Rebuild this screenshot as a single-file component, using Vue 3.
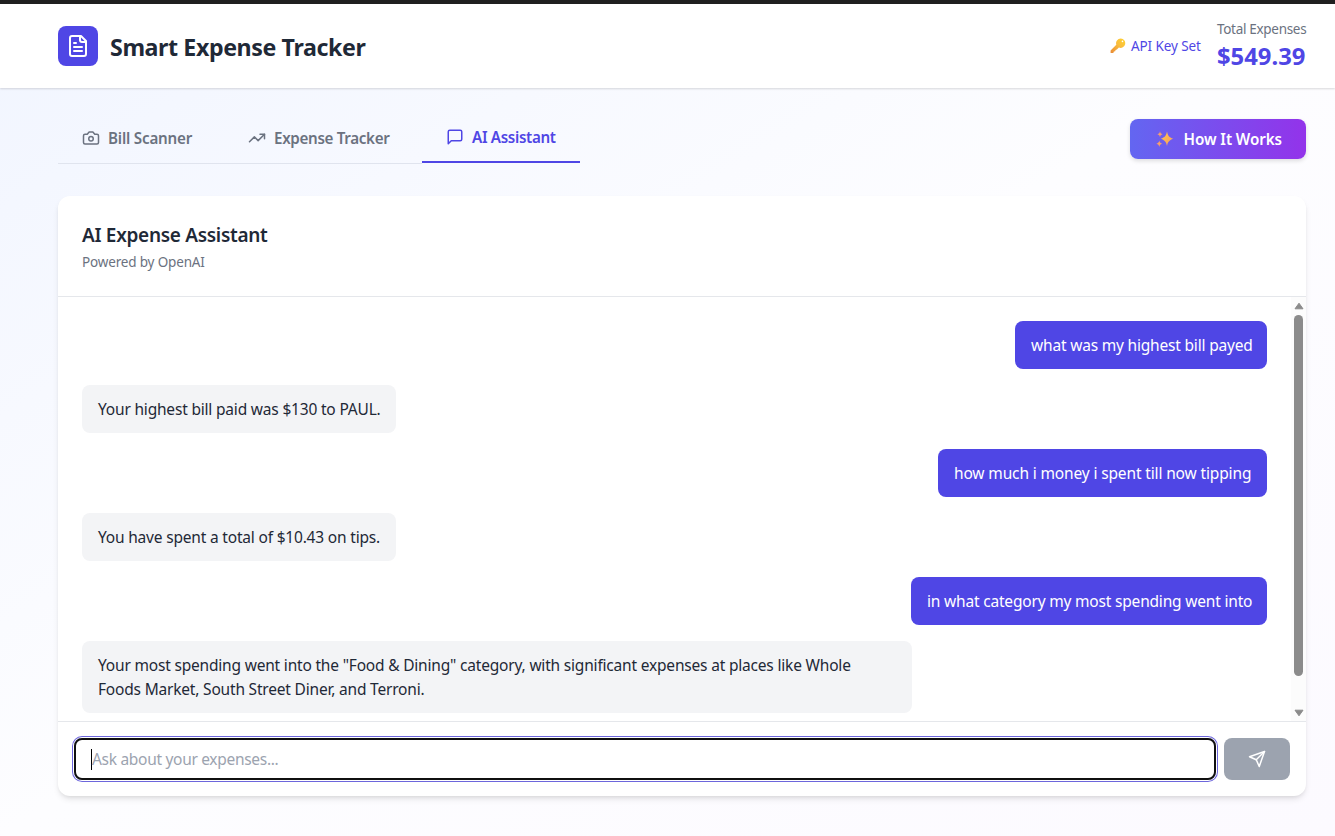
<script setup>
const tabs = [
  { label: 'Bill Scanner', icon: 'camera', cls: 'scan' },
  { label: 'Expense Tracker', icon: 'trend', cls: 'track' },
  { label: 'AI Assistant', icon: 'chat', cls: 'active' },
]
const messages = [
  { from: 'user', cls: 'm1', text: 'what was my highest bill payed' },
  { from: 'bot', cls: 'm2', text: 'Your highest bill paid was $130 to PAUL.' },
  { from: 'user', cls: 'm3', text: 'how much i money i spent till now tipping' },
  { from: 'bot', cls: 'm4', text: 'You have spent a total of $10.43 on tips.' },
  { from: 'user', cls: 'm5', text: 'in what category my most spending went into' },
  { from: 'bot', cls: 'm6', text: 'Your most spending went into the "Food & Dining" category, with significant expenses at places like Whole Foods Market, South Street Diner, and Terroni.' },
]
</script>

<template>
  <div class="page">
    <header class="header">
      <div class="brand">
        <div class="logo">
          <svg class="ico" width="24" height="24" viewBox="0 0 24 24"><path d="M15 2H6a2 2 0 0 0-2 2v16a2 2 0 0 0 2 2h12a2 2 0 0 0 2-2V7Z" /><path d="M14 2v4a2 2 0 0 0 2 2h4" /><path d="M10 9H8" /><path d="M16 13H8" /><path d="M16 17H8" /></svg>
        </div>
        <h1><span>Smart Expense Tracker</span></h1>
      </div>
      <div class="summary">
        <div class="api">
          <svg width="16" height="16" viewBox="0 0 16 16">
            <defs><linearGradient id="kg" x1="1" y1="0" x2="0" y2="1"><stop offset="0" stop-color="#ffd22e" /><stop offset=".45" stop-color="#f9bd3d" /><stop offset="1" stop-color="#e98a35" /></linearGradient></defs>
            <path fill="url(#kg)" fill-rule="evenodd" d="M10.800.5a4.700 4.700 0 0 0-4.500 6.200L.6 12.400v2.500h2.700l.6-1.300 1.300-.3.4-1.300 1.300-.4 2-2A4.700 4.700 0 1 0 10.800.5Zm1.700 2.100a.8.8 0 1 1 0 1.600.8.800 0 0 1 0-1.600Z" />
          </svg>
          <span>API Key Set</span>
        </div>
        <div class="total"><div class="total-label"><span>Total Expenses</span></div><div class="total-value"><span>$549.39</span></div></div>
      </div>
    </header>
    <main class="main">
      <div class="toolbar">
        <nav class="tabs">
          <div v-for="t in tabs" :key="t.label" class="tab" :class="t.cls">
            <svg class="ico" width="18" height="18" viewBox="0 0 24 24">
              <template v-if="t.icon === 'camera'"><path d="M14.500 4h-5L7 7H4a2 2 0 0 0-2 2v9a2 2 0 0 0 2 2h16a2 2 0 0 0 2-2V9a2 2 0 0 0-2-2h-3l-2.500-3z" /><circle cx="12" cy="13" r="3" /></template>
              <template v-else-if="t.icon === 'trend'"><path d="m22 7-8.500 8.500-5-5L2 17" /><path d="M16 7h6v6" /></template>
              <path v-else d="M21 15a2 2 0 0 1-2 2H7l-4 4V5a2 2 0 0 1 2-2h14a2 2 0 0 1 2 2z" />
            </svg>
            <span>{{ t.label }}</span>
          </div>
        </nav>
        <button class="how">
          <svg width="18" height="18" viewBox="0 0 18 18">
            <defs><linearGradient id="sg" x1="0" y1="0" x2="1" y2="1"><stop offset="0" stop-color="#ffc84a" /><stop offset="1" stop-color="#f89b62" /></linearGradient></defs>
            <path fill="url(#sg)" d="M11 1.500c.9 4.300 2 5.700 6.200 7.300-4.200 1.600-5.300 3-6.200 7.300-.9-4.300-2-5.700-6.200-7.300C9 7.200 10.100 5.800 11 1.500Z" />
            <path fill="url(#sg)" d="M11 4.500c1 2.500 1.700 3.300 4 4.300-2.300 1-3 1.800-4 4.300-1-2.500-1.700-3.300-4-4.300 2.300-1 3-1.800 4-4.300Z" />
            <path fill="#f7a06c" d="M4 1.300c.4 1.900.9 2.300 2.600 3-1.700.6-2.200 1.100-2.600 3-.4-1.900-.9-2.400-2.600-3 1.700-.7 2.200-1.100 2.600-3ZM3.300 10.600c.4 2 1 2.500 2.900 3.200-1.900.6-2.500 1.200-2.900 3.200-.4-2-1-2.600-2.900-3.200 1.900-.7 2.500-1.200 2.900-3.200Z" />
          </svg>
          <span>How It Works</span>
        </button>
      </div>
      <section class="card">
        <div class="card-head"><h2><span>AI Expense Assistant</span></h2><p><span>Powered by OpenAI</span></p></div>
        <div class="chat">
          <div class="messages">
            <div v-for="m in messages" :key="m.cls" class="bubble" :class="[m.from, m.cls]"><span>{{ m.text }}</span></div>
          </div>
          <div class="scroll">
            <svg width="10" height="8" viewBox="0 0 10 8"><path d="M5 1.200 9 6.800H1Z" /></svg>
            <div class="thumb"></div>
            <svg class="down" width="10" height="8" viewBox="0 0 10 8"><path d="M5 6.800 9 1.200H1Z" /></svg>
          </div>
        </div>
        <div class="composer">
          <div class="field"><i class="caret"></i><span>Ask about your expenses...</span></div>
          <button class="send"><svg class="ico" width="18" height="18" viewBox="0 0 24 24"><path d="m22 2-7 20-4-9-9-4Z" /><path d="M22 2 11 13" /></svg></button>
        </div>
      </section>
    </main>
  </div>
</template>

<style>
body { margin: 0; overflow: hidden; }
</style>
<style scoped>
* { box-sizing: border-box; }
.page { height: 836px; display: flex; flex-direction: column; border-top: 4px solid #202020; background: linear-gradient(to bottom right, #f1f5ff 0%, #fdfdff 50%, #fcfaff 100%); font-family: "Noto Sans", "Open Sans", sans-serif; font-size: 15.500px; line-height: 24px; color: #1f2937; overflow: hidden; }
span { white-space: nowrap; }
.ico { fill: none; stroke: currentColor; stroke-width: 2; stroke-linecap: round; stroke-linejoin: round; flex: none; }
svg { display: block; flex: none; }
.header { height: 84px; flex: none; background: #fff; padding: 0 29px 0 58px; display: flex; justify-content: space-between; align-items: center; box-shadow: 0 1px 2px rgba(0,0,0,.15); }
.brand { display: flex; align-items: center; gap: 12px; }
.logo { width: 40px; height: 40px; border-radius: 8px; background: #4f46e5; color: #fff; display: grid; place-items: center; }
h1 { margin: 2px 0 0; font-size: 23.200px; line-height: 32px; font-weight: 700; letter-spacing: -.4px; }
.summary { display: flex; align-items: center; gap: 16px; }
.api { display: flex; align-items: center; gap: 5px; width: 91px; font-size: 13.500px; letter-spacing: -.1px; color: #4f46e5; }
.total { width: 89px; display: flex; flex-direction: column; align-items: flex-start; padding-top: 1px; }
.total-label { font-size: 13.500px; line-height: 19px; letter-spacing: -.31px; color: #6b7280; }
.total-value { font-size: 23.800px; line-height: 34px; font-weight: 700; color: #4f46e5; }
.main { padding: 25px 29px 0 58px; }
.toolbar { display: flex; justify-content: space-between; align-items: center; height: 51px; }
.tabs { display: flex; height: 51px; }
.tab { display: flex; align-items: center; gap: 8px; padding: 0 24px; border-bottom: 1px solid #e0e4ee; color: #6b7280; font-size: 15.200px; font-weight: 600; letter-spacing: -.33px; }
.scan { width: 166px; padding-right: 0; letter-spacing: -.2px; }
.track { width: 198px; padding-right: 0; }
.active { width: 158px; height: 50px; padding-right: 0; border-bottom: 2px solid #4f46e5; color: #4f46e5; }
.how { width: 176px; height: 40px; border: 0; border-radius: 8px; padding: 0 24px 0 26px; color: #fff; background: linear-gradient(90deg, #6366f1, #9333ea); font: 600 15.200px/24px "Noto Sans", sans-serif; letter-spacing: -.08px; display: flex; align-items: center; justify-content: space-between; box-shadow: 0 2px 4px rgba(0,0,0,.13); }
.card { margin-top: 32px; height: 600px; background: #fff; border-radius: 12px; box-shadow: 0 4px 6px -1px rgba(0,0,0,.1), 0 2px 4px -2px rgba(0,0,0,.1); display: flex; flex-direction: column; }
.card-head { height: 101px; padding: 24px; border-bottom: 1px solid #e5e7eb; }
h2 { margin: 0; font-size: 19px; line-height: 30px; font-weight: 600; letter-spacing: -.3px; }
p { margin: 2px 0 0; font-size: 13.500px; letter-spacing: -.16px; line-height: 20px; color: #6b7280; }
.chat { height: 424px; display: flex; overflow: hidden; }
.messages { flex: 1; padding: 24px; display: flex; flex-direction: column; gap: 16px; }
.bubble { padding: 12px 16px; border-radius: 8px; flex: none; letter-spacing: -.19px; }
.user { align-self: flex-end; background: #4f46e5; color: #fff; }
.bot { align-self: flex-start; background: #f3f4f6; }
.m1 { width: 252px; }
.m2, .m4 { width: 314px; }
.m3 { width: 329px; letter-spacing: -.14px; }
.m5 { width: 356px; }
.m6 { width: 830px; }
.m6 span { white-space: normal; }
.scroll { width: 15px; background: #fcfcfc; display: flex; flex-direction: column; align-items: center; padding-top: 5px; }
.scroll svg { fill: #8b8b8b; stroke: #8b8b8b; stroke-linejoin: round; }
.thumb { width: 9px; height: 361px; margin-top: 5px; border-radius: 5px; background: #8b8b8b; }
.down { margin-top: 33px; }
.composer { height: 75px; border-top: 1px solid #e5e7eb; display: flex; justify-content: space-between; padding: 16px; }
.field { width: 1142px; height: 42px; border: 2px solid #101010; border-radius: 8px; box-shadow: 0 0 0 1px #fff, 0 0 0 2px #6d66dc; padding: 0 15px; display: flex; align-items: center; color: #9ca3af; letter-spacing: -.3px; }
.caret { width: 1px; height: 21px; background: #000; flex: none; }
.send { width: 66px; height: 42px; border: 0; border-radius: 8px; padding: 0; background: #9ca3af; color: #fff; display: grid; place-items: center; }
</style>
